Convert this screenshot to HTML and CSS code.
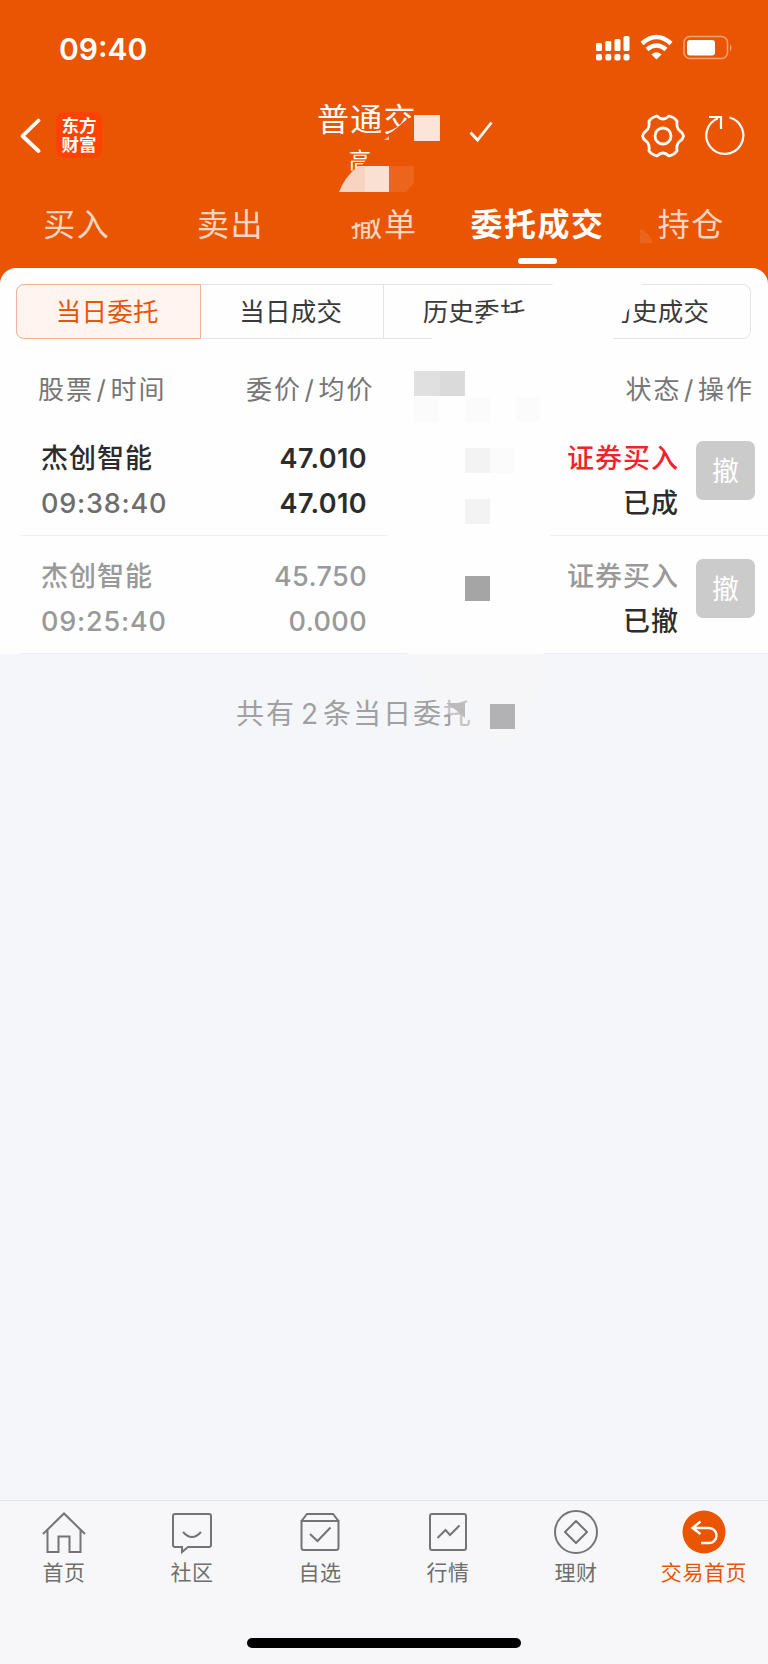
FILE: index.html
```html
<!DOCTYPE html>
<html lang="zh-CN">
<head>
<meta charset="utf-8">
<title>委托成交</title>
<link rel="stylesheet" href="styles.css">
</head>
<body>
<div class="app">
  <header class="header">
    <div class="status">
      <span class="clock">09:40</span>
      <svg class="status-icons" width="140" height="28" viewBox="0 0 140 28" fill="#fff">
        <rect x="1" y="9" width="6" height="8" rx="1.5"/><rect x="10.300" y="7" width="6" height="10" rx="1.500"/><rect x="19.500" y="5" width="6" height="12" rx="1.500"/><rect x="28.500" y="2" width="6" height="15" rx="1.500"/>
        <rect x="1" y="20" width="6" height="6.500" rx="2"/><rect x="10.300" y="20" width="6" height="6.500" rx="2"/><rect x="19.500" y="20" width="6" height="6.500" rx="2"/><rect x="28.500" y="20" width="6" height="6.500" rx="2"/>
        <path d="M47 9.500Q61.500-3.500 76 9.500" fill="none" stroke="#fff" stroke-width="4.500"/>
        <path d="M52 15.500Q61.500 7.500 71 15.500" fill="none" stroke="#fff" stroke-width="4.500"/>
        <path d="M56.500 20.500Q61.500 16 66.500 20.500L61.500 25.500Z"/>
        <rect x="89" y="2.500" width="43.500" height="22" rx="6" fill="none" stroke="#fff" stroke-opacity=".45" stroke-width="1.600"/>
        <rect x="92" y="6" width="28" height="15.500" rx="3"/>
        <path d="M135 10.500q3 3 0 7z" fill-opacity=".5"/>
      </svg>
    </div>
    <div class="navbar">
      <div class="nav-left">
        <svg width="22" height="36" viewBox="0 0 22 36" fill="none" stroke="#fff" stroke-width="3.800" stroke-linecap="round" stroke-linejoin="round"><path d="M18.500 2.500 2.500 18l16 15"/></svg>
        <div class="logo"><span>东方</span><span>财富</span></div>
      </div>
      <div class="nav-title">
        <span class="title">普通交</span>
        <span class="subtitle">高</span>
      </div>
      <svg class="check" width="24" height="22" viewBox="0 0 24 22" fill="none" stroke="#fff" stroke-width="2.800"><path d="M1.500 11.500 8.500 19 22.500 1.500"/></svg>
      <div class="nav-right">
        <svg width="46" height="46" viewBox="0 0 46 46" fill="none" stroke="#fff" stroke-width="2.800" stroke-linejoin="round"><path d="M17 3Q20 6 23 6T29 3Q34 4 37 8Q36 15 40 18Q43 20 43.500 23Q43 26 40 28Q36 31 37 38Q34 42 29 43Q26 40 23 40T17 43Q12 42 9 38Q10 31 6 28Q3 26 2.500 23Q3 20 6 18Q10 15 9 8Q12 4 17 3Z"/><circle cx="23" cy="23" r="8"/></svg>
        <svg class="refresh" width="42" height="42" viewBox="0 0 42 42" fill="none" stroke="#fff" stroke-width="2.200"><path d="M24.500 3.500A18.500 18.500 0 1 1 13 4.200M4 3H16V15"/></svg>
      </div>
    </div>
    <nav class="tabs">
      <span>买入</span><span>卖出</span><span>撤单</span><span class="on">委托成交</span><span>持仓</span>
    </nav>
  </header>
  <main class="panel">
    <div class="segments">
      <span class="on">当日委托</span><span>当日成交</span><span>历史委托</span><span>历史成交</span>
    </div>
    <div class="columns"><span class="c1">股票<i>/</i>时间</span><span class="c2">委价<i>/</i>均价</span><span class="c3">状态<i>/</i>操作</span></div>
    <section class="order">
      <div class="stock"><b>杰创智能</b><span class="num">09:38:40</span></div>
      <div class="price"><span>47.010</span><span>47.010</span></div>
      <div class="state"><span class="red">证券买入</span><b>已成</b></div>
      <button class="cancel">撤</button>
    </section>
    <section class="order muted">
      <div class="stock"><b>杰创智能</b><span class="num">09:25:40</span></div>
      <div class="price"><span>45.750</span><span>0.000</span></div>
      <div class="state"><span>证券买入</span><b>已撤</b></div>
      <button class="cancel">撤</button>
    </section>
  </main>
  <p class="summary">共有<i>2</i>条当日委托</p>
  <footer class="tabbar">
    <div class="items">
      <div class="item"><svg width="46" height="46" viewBox="0 0 46 46"><path d="M2 24 23 3.500 44 24M6.500 20V42H17.500V26.500H28.500V42H39.500V20"/></svg><span>首页</span></div>
      <div class="item"><svg width="46" height="46" viewBox="0 0 46 46"><path d="M6 4H40Q42 4 42 6V35Q42 37 40 37H19L13 42V37H6Q4 37 4 35V6Q4 4 6 4ZM14 22Q23 32 32 22"/></svg><span>社区</span></div>
      <div class="item"><svg width="46" height="46" viewBox="0 0 46 46"><path d="M4.500 11V37.500Q4.500 40 7 40H39Q41.500 40 41.500 37.500V11ZM4.500 11 10 4H36L41.500 11M13 24 20.500 31 33.500 17.500"/></svg><span>自选</span></div>
      <div class="item"><svg width="46" height="46" viewBox="0 0 46 46"><rect x="5" y="4" width="36" height="36" rx="2"/><path d="M12.500 28 20.500 20 25 25 34.500 15.500"/></svg><span>行情</span></div>
      <div class="item"><svg width="46" height="46" viewBox="0 0 46 46"><circle cx="23" cy="22" r="21"/><path d="M23 11 34 22 23 33 12 22Z" stroke-linejoin="round"/></svg><span>理财</span></div>
      <div class="item on"><svg width="46" height="46" viewBox="0 0 46 46"><circle class="disc" cx="23" cy="22" r="21.500"/><path d="M19.500 11.500 11.500 18 19.500 24M11.500 18H28A7.500 7.500 0 0 1 28 33H20"/></svg><span>交易首页</span></div>
    </div>
    <div class="home-bar"></div>
  </footer>
  <svg class="redaction" width="768" height="800" viewBox="0 0 768 800">
    <path fill="#ea5504" d="M416 114 405 121 393 131 386 135V143H416ZM355 192V172L360 168 371 153V192ZM345 205H384V216Q376 221 350 223H345Z"/>
    <path fill="#f6b58f" d="M384 140 389 136V140Z"/>
    <path fill="#fce4d8" d="M414 115H440V141H414Z"/>
    <path fill="#f8d3c0" d="M339 192Q344 178 358 166H365V192Z"/>
    <path fill="#fae0d2" d="M365 166H389V192H365Z"/>
    <path fill="#ed651c" d="M389 166H414V183L406 192H389ZM640 229Q648 231 653 243H640Z"/>
    <path fill="#fefefe" d="M557 276H646L613 339Q608 352 603 368C566 420 545 510 543 654H408Q384 585 388 500C391 415 405 365 433 338L480 324Q486 316 497 313H525Q538 304 553 284Z"/>
    <path fill="#f7f8fb" d="M408 654H543Q541 701 520 744Q470 750 430 690Z" fill-opacity=".4"/>
    <path fill="#e0e0e0" d="M414 371H440V396H414Z"/><path fill="#dadada" d="M440 371H465V396H440Z"/>
    <path fill="#fbfbfb" d="M414 397H439V422H414ZM465 397H490V422H465ZM516 397H540V422H516ZM490 448H515V473H490Z"/>
    <path fill="#f3f3f3" d="M465 448H490V473H465ZM465 499H490V524H465Z"/>
    <path fill="#a5a5a5" d="M465 576H490V601H465Z"/>
    <path fill="#f5f6f9" d="M455 706 476 700V719H467Z"/>
    <path fill="#bbbbbe" d="M446 703H465V718Q457 710 446 703Z"/>
    <path fill="#b2b2b5" d="M490 704H515V729H490Z"/>
  </svg>
</div>
</body>
</html>
```
FILE: styles.css
```css
* { box-sizing: border-box; }
body { margin: 0; font-family: Inter, "Noto Sans CJK SC", sans-serif; color: #2c2c2c; }
i { font-style: normal; }
.app { position: relative; width: 768px; height: 1664px; display: flex; flex-direction: column; background: #f5f6f9; overflow: hidden; }
.header { height: 268px; flex: none; background: #ea5504; color: #fff; }
.status { height: 96px; display: flex; justify-content: space-between; align-items: center; padding: 0 33px 0 59px; }
.clock { font-size: 30px; font-weight: 600; line-height: 36px; padding-top: 2px; }
.navbar { height: 100px; display: flex; padding: 0 21px 0 20px; }
.nav-left { width: 297px; display: flex; align-items: center; gap: 14px; padding-bottom: 20px; height: 100px; }
.logo { width: 46px; height: 46px; margin-top: -2px; border-radius: 8px; background: #ff4200; display: flex; flex-direction: column; justify-content: center; align-items: center; font-weight: 700; font-size: 17.500px; line-height: 19px; }
.nav-title { width: 152px; display: flex; flex-direction: column; }
.title { font-size: 32px; letter-spacing: 1.300px; line-height: 40px; margin-top: 4px; }
.subtitle { font-size: 22px; line-height: 28px; padding-left: 32px; margin-top: 6px; }
.check { margin-top: 25px; }
.nav-right { margin-left: auto; display: flex; gap: 19px; padding-top: 17px; }
.refresh { margin-top: 1px; }
.tabs { height: 72px; display: flex; font-size: 32px; letter-spacing: 1.500px; line-height: 58px; color: #fbd6c2; }
.tabs span { width: 153.600px; text-align: center; }
.tabs .on { color: #fff; font-weight: 700; position: relative; white-space: nowrap; }
.tabs .on::after { content: ""; position: absolute; left: 57px; top: 62px; width: 39px; height: 6px; border-radius: 3px; background: #fff; }
.panel { height: 386px; flex: none; background: linear-gradient(#fefefe, #fefefe); border-radius: 16px 16px 0 0; padding-top: 16px; }
.header { margin-bottom: -16px; padding-bottom: 16px; height: 284px; }
.panel { z-index: 0; }
.segments { display: flex; height: 55px; margin: 0 17px 0 16px; border: 1px solid #e2e3e9; border-radius: 8px; }
.segments span { flex: 1; text-align: center; font-size: 25.500px; letter-spacing: .300px; line-height: 53px; padding-right: 2px; color: #3a3a3a; border-right: 1px solid #e2e3e9; }
.segments span:last-child { border: 0; }
.segments .on { color: #ea5504; background: #fff4ef; border: 1px solid #efb395; margin: -1px 0 -1px -1px; border-radius: 8px 0 0 8px; }
.columns { display: flex; height: 79px; padding: 32px 14px 0 38px; font-size: 26px; line-height: 38px; letter-spacing: 2px; color: #767676; }
.columns i { margin: 0 2.500px; }
.c1 { width: 208px; }
.c3 { margin-left: auto; }
.order { display: flex; height: 118px; margin-left: 20px; padding: 18px 13px 0 21px; border-bottom: 1px solid #f0f0f0; font-size: 27px; line-height: 45px; font-weight: 500; letter-spacing: 1px; }
.order b { font-weight: 500; }
.stock, .price, .state { display: flex; flex-direction: column; }
.stock { width: 180px; color: #6d6d6d; }
.stock b { color: #2c2c2c; }
.num { letter-spacing: .800px; }
.price { width: 146px; text-align: right; font-weight: 600; letter-spacing: .400px; }
.state { width: 312px; text-align: right; }
.red { color: #f3232b; }
.muted { color: #999; }
.muted .price { font-weight: 500; }
.muted .stock, .muted .stock b { color: #999; }
.muted .state b { color: #2c2c2c; }
.cancel { width: 59px; height: 59px; margin: 5px 0 0 17px; padding: 0 0 2px; border: 0; border-radius: 7px; background: #cbcbcb; color: #fff; font: 400 27px "Noto Sans CJK SC", sans-serif; }
.summary { margin: 40px 0 0 236px; font-size: 28px; line-height: 40px; letter-spacing: 2px; color: #a0a0a2; }
.summary i { padding: 0 3px 0 5px; }
.tabbar { margin-top: auto; height: 164px; border-top: 1px solid #e3e6ea; background: #f7f7f9; }
.items { display: grid; grid-template-columns: repeat(6, 128px); height: 137px; }
.item { display: flex; flex-direction: column; align-items: center; padding-top: 9px; font-size: 21px; line-height: 30px; letter-spacing: .600px; color: #6e6e6e; }
.item svg { fill: none; stroke: #747474; stroke-width: 2; margin-bottom: 2px; }
.item.on { color: #ea5504; }
.item.on svg { stroke: #fff; stroke-width: 2.400; }
.disc { fill: #ea5504; stroke: none; }
.home-bar { width: 274px; height: 10px; margin: 0 auto; border-radius: 5px; background: #000; }
.redaction { position: absolute; left: 0; top: 0; }
```
